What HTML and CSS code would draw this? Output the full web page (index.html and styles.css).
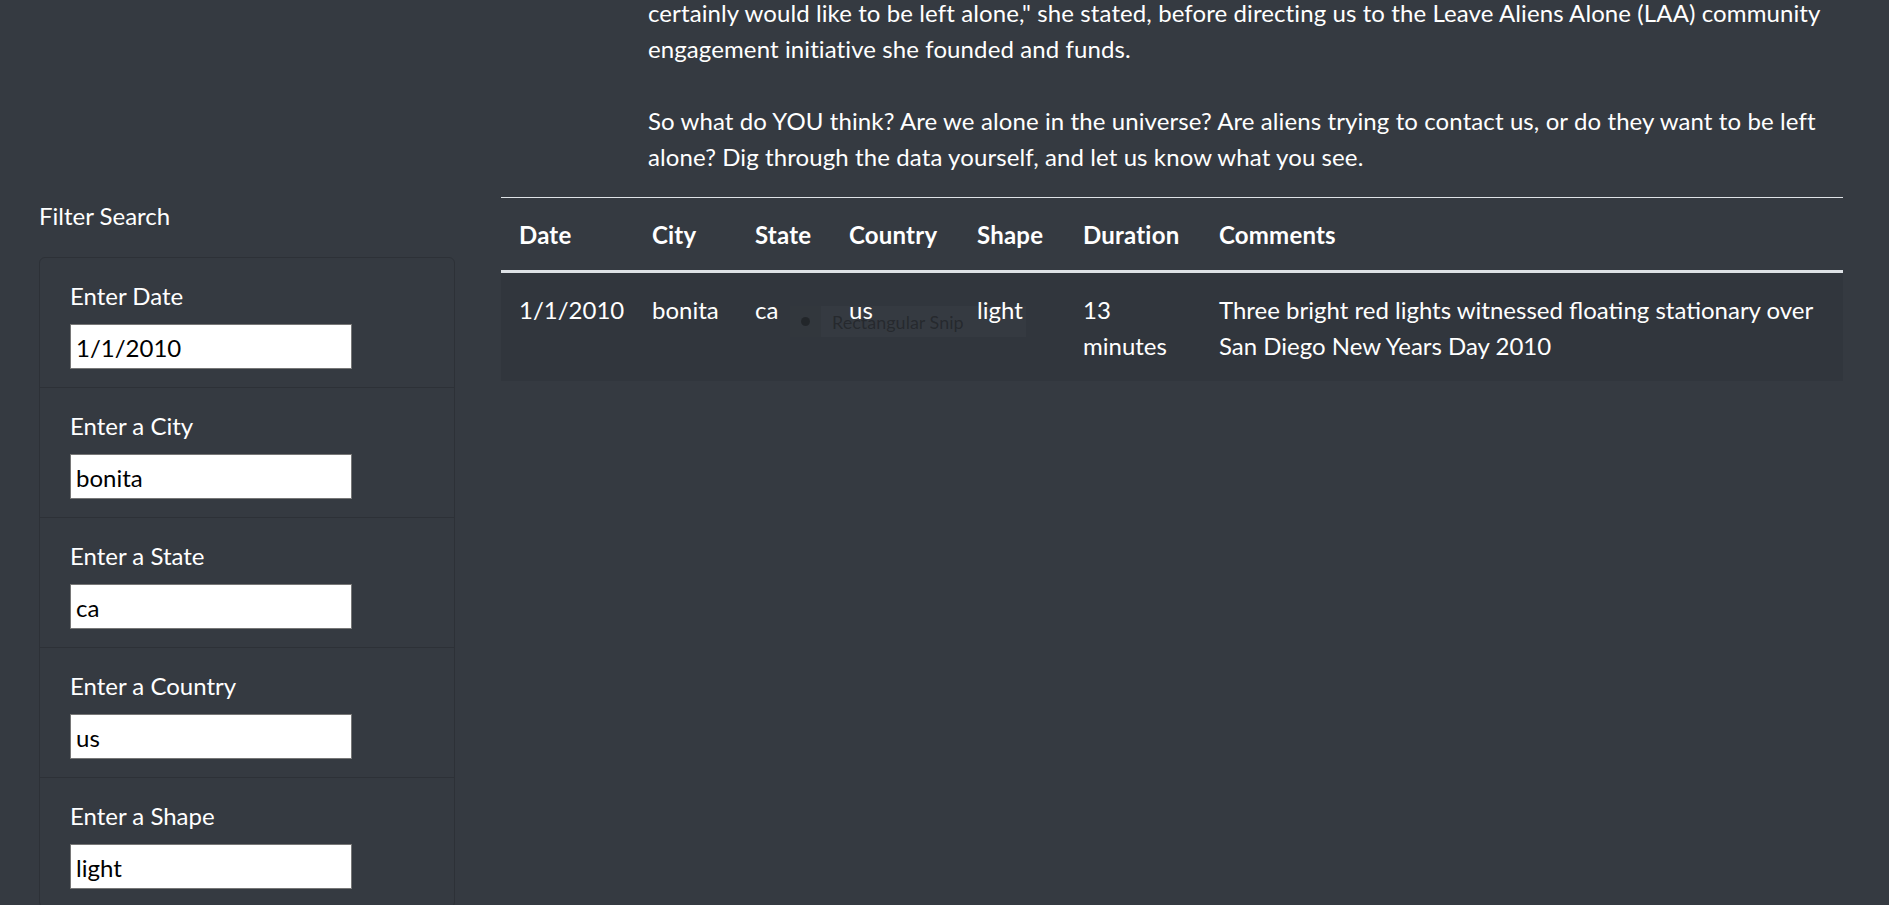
FILE: index.html
```html
<!DOCTYPE html>
<html lang="en">
<head>
<meta charset="utf-8">
<title>UFO Sightings</title>
<link rel="stylesheet" href="styles.css">
</head>
<body>
<div class="page">
  <div class="intro">
    <p class="story">certainly would like to be left alone," she stated, before directing us to the Leave Aliens Alone (LAA) community engagement initiative she founded and funds.<br><br>So what do YOU think? Are we alone in the universe? Are aliens trying to contact us, or do they want to be left alone? Dig through the data yourself, and let us know what you see.</p>
  </div>
  <div class="main">
    <aside class="filters">
      <div class="filter-title">Filter Search</div>
      <ul class="filter-list">
        <li class="filter-item"><label class="filter-label" for="datetime">Enter Date</label><input class="filter-input" id="datetime" type="text" value="1/1/2010"></li>
        <li class="filter-item"><label class="filter-label" for="city">Enter a City</label><input class="filter-input" id="city" type="text" value="bonita"></li>
        <li class="filter-item"><label class="filter-label" for="state">Enter a State</label><input class="filter-input" id="state" type="text" value="ca"></li>
        <li class="filter-item"><label class="filter-label" for="country">Enter a Country</label><input class="filter-input" id="country" type="text" value="us"></li>
        <li class="filter-item"><label class="filter-label" for="shape">Enter a Shape</label><input class="filter-input" id="shape" type="text" value="light"></li>
      </ul>
    </aside>
    <section class="results">
      <table class="ufo-table">
        <colgroup>
          <col class="c-date"><col class="c-city"><col class="c-state"><col class="c-country"><col class="c-shape"><col class="c-duration"><col class="c-comments">
        </colgroup>
        <thead>
          <tr><th>Date</th><th>City</th><th>State</th><th>Country</th><th>Shape</th><th>Duration</th><th>Comments</th></tr>
        </thead>
        <tbody>
          <tr><td>1/1/2010</td><td>bonita</td><td>ca</td><td>us</td><td>light</td><td>13 minutes</td><td>Three bright red lights witnessed floating stationary over San Diego New Years Day 2010</td></tr>
        </tbody>
      </table>
      <div class="snip"><span class="snip-icon"><span class="snip-dot"></span></span><span class="snip-text">Rectangular Snip</span></div>
    </section>
  </div>
</div>
</body>
</html>
```

FILE: styles.css
```css
* { box-sizing: border-box; }
html, body { margin: 0; padding: 0; }
body {
  background: #353a41;
  color: #fff;
  font-family: Lato, "Liberation Sans", sans-serif;
  font-size: 24px;
  line-height: 36px;
  overflow: hidden;
  height: 905px;
}
.page { width: 1889px; }
.intro { padding: 0 60px 0 648px; margin-top: -5px; }
.story { margin: 0 0 22px 0; letter-spacing: 0.1px; }
.main { display: flex; align-items: flex-start; padding-left: 39px; gap: 46px; }
.filters { width: 416px; flex: none; }
.filter-title { line-height: 36px; padding-top: 1px; margin-bottom: 23px; }
.filter-list {
  list-style: none; margin: 0; padding: 0;
  border: 1px solid #2d3137; border-radius: 6px;
}
.filter-item { padding: 18px 30px; border-top: 1px solid #2d3137; }
.filter-item:first-child { border-top: 0; }
.filter-label { display: block; padding-top: 2px; margin-bottom: 10px; }
.filter-input {
  display: block; width: 282px; height: 45px;
  border: 1px solid #767676; background: #fff; color: #000;
  font: 24px/1 Lato, "Liberation Sans", sans-serif;
  padding: 1px 5px 0; margin: 0; outline: none;
}
.results { position: relative; width: 1342px; flex: none; }
.ufo-table { width: 100%; border-collapse: collapse; table-layout: fixed; }
.c-date { width: 133px; } .c-city { width: 103px; } .c-state { width: 94px; }
.c-country { width: 128px; } .c-shape { width: 106px; } .c-duration { width: 136px; }
.ufo-table th, .ufo-table td { padding: 19px 18px 17px; text-align: left; vertical-align: top; }
.ufo-table th { font-weight: 700; letter-spacing: 0.2px; border-top: 1px solid #dee2e6; border-bottom: 3px solid #dee2e6; }
.ufo-table tbody tr { background: rgba(0,0,0,0.06); }
.snip {
  position: absolute; left: 289px; top: 109px; width: 236px; height: 31px;
  display: flex; align-items: center; background: rgba(255,255,255,0.025);
}
.snip-icon { width: 31px; height: 31px; display: flex; align-items: center; justify-content: center; background: rgba(0,0,0,0.05); }
.snip-dot { width: 9px; height: 9px; border-radius: 50%; background: rgba(0,0,0,0.3); }
.snip-text { margin-left: 11px; font-size: 18px; color: rgba(0,0,0,0.3); }
```
